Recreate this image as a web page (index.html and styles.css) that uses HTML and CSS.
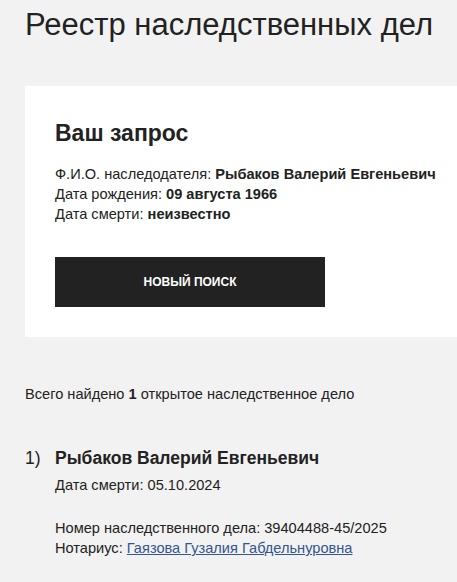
FILE: index.html
```html
<!DOCTYPE html>
<html lang="ru">
<head>
<meta charset="utf-8">
<link rel="stylesheet" href="styles.css">
</head>
<body>
<div class="page">
  <h1 class="title">Реестр наследственных дел</h1>
  <section class="card">
    <h2 class="card-title">Ваш запрос</h2>
    <div class="info">
      <div>Ф.И.О. наследодателя: <b>Рыбаков Валерий Евгеньевич</b></div>
      <div>Дата рождения: <b>09 августа 1966</b></div>
      <div>Дата смерти: <b>неизвестно</b></div>
    </div>
    <button class="btn">НОВЫЙ ПОИСК</button>
  </section>
  <p class="total">Всего найдено <b>1</b> открытое наследственное дело</p>
  <div class="item">
    <div class="num">1)</div>
    <div class="item-body">
      <div class="name">Рыбаков Валерий Евгеньевич</div>
      <div class="death">Дата смерти: 05.10.2024</div>
      <div class="case">Номер наследственного дела: 39404488-45/2025</div>
      <div>Нотариус: <a href="#" class="link">Гаязова Гузалия Габдельнуровна</a></div>
    </div>
  </div>
</div>
</body>
</html>
```
FILE: styles.css
```css
html, body { margin: 0; padding: 0; }
body {
  background: #f2f2f2;
  font-family: "Liberation Sans", Arial, sans-serif;
  color: #222;
  width: 457px;
  overflow: hidden;
}
.page { padding: 0 0 0 25px; }
.title {
  margin: 0;
  padding-top: 7px;
  font-size: 31px;
  font-weight: normal;
  line-height: 36px;
  white-space: nowrap;
}
.card {
  margin-top: 43px;
  background: #fff;
  padding: 33px 0 30px 30px;
}
.card-title {
  margin: 0;
  font-size: 23px;
  font-weight: bold;
  line-height: 28px;
}
.info {
  margin-top: 17px;
  font-size: 14.6px;
  line-height: 20px;
  white-space: nowrap;
}
.btn {
  display: block;
  margin-top: 33px;
  width: 270px;
  height: 50px;
  border: 0;
  background: #222;
  color: #fff;
  font-family: inherit;
  font-size: 12px;
  font-weight: bold;
  padding: 0;
}
.total {
  margin: 47px 0 0;
  font-size: 14.6px;
  line-height: 20px;
}
.item {
  display: flex;
  margin-top: 42px;
  font-size: 14.6px;
  line-height: 20px;
}
.num {
  width: 30px;
  font-size: 17.5px;
  line-height: 24px;
}
.name {
  font-size: 17.5px;
  font-weight: bold;
  line-height: 24px;
  white-space: nowrap;
}
.death { margin-top: 5px; }
.case { margin-top: 23px; }
.link { color: #34558f; }
```
